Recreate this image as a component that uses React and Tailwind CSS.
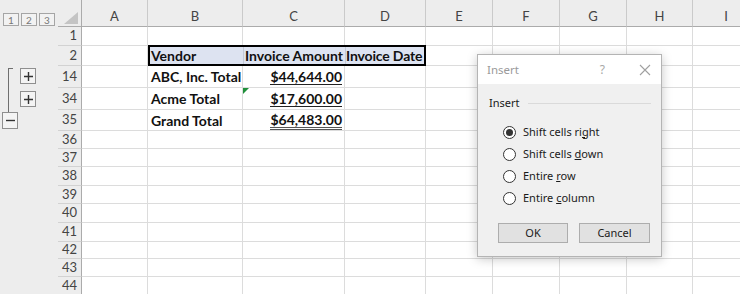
import React from 'react';

const COLS = [
  { k: 'A', w: 'w-[66px]' },
  { k: 'B', w: 'w-[95px]' },
  { k: 'C', w: 'w-[102px]' },
  { k: 'D', w: 'w-[81px]' },
  { k: 'E', w: 'w-[67px]' },
  { k: 'F', w: 'w-[67px]' },
  { k: 'G', w: 'w-[67px]' },
  { k: 'H', w: 'w-[66px]' },
  { k: 'I', w: 'w-[67px]' },
];

const ROWS = [
  { n: 1, h: 'h-[19px]' },
  { n: 2, h: 'h-[20px]' },
  { n: 14, h: 'h-[22px]', vendor: 'ABC, Inc. Total', amount: '$44,644.00', line: 'single' },
  { n: 34, h: 'h-[22px]', vendor: 'Acme Total', amount: '$17,600.00', line: 'single', flag: true },
  { n: 35, h: 'h-[21px]', vendor: 'Grand Total', amount: '$64,483.00', line: 'double' },
  { n: 36, h: 'h-[18px]' },
  { n: 37, h: 'h-[18px]' },
  { n: 38, h: 'h-[19px]' },
  { n: 39, h: 'h-[18px]' },
  { n: 40, h: 'h-[19px]' },
  { n: 41, h: 'h-[19px]' },
  { n: 42, h: 'h-[17px]' },
  { n: 43, h: 'h-[18px]' },
  { n: 44, h: 'h-[18px]' },
];

const grid = 'shrink-0 border-r border-b border-[#dcdcdc]';

function OutlineBtn({ children, className }) {
  return (
    <div className={`absolute w-[16px] h-[16px] border border-[#8f8f8f] bg-[#f4f4f4] flex items-center justify-center text-[#444] ${className}`}>
      {children}
    </div>
  );
}

function OutlineCell({ n }) {
  return (
    <div className="relative w-[58px] shrink-0 bg-[#ededed]">
      {n === 14 && (
        <>
          <div className="absolute left-[8px] top-[2px] bottom-0 w-[5px] border-l border-t border-[#6f6f6f]" />
          <OutlineBtn className="left-[20px] top-[2px]">
            <svg width="9" height="9" viewBox="0 0 9 9"><path d="M4.5 0v9M0 4.5h9" stroke="#333" strokeWidth="1.4" /></svg>
          </OutlineBtn>
        </>
      )}
      {n === 34 && (
        <>
          <div className="absolute left-[8px] top-0 bottom-0 border-l border-[#6f6f6f]" />
          <OutlineBtn className="left-[20px] top-[3px]">
            <svg width="9" height="9" viewBox="0 0 9 9"><path d="M4.5 0v9M0 4.5h9" stroke="#333" strokeWidth="1.4" /></svg>
          </OutlineBtn>
        </>
      )}
      {n === 35 && (
        <>
          <div className="absolute left-[8px] top-0 h-[2px] border-l border-[#6f6f6f]" />
          <OutlineBtn className="left-[2px] top-[2px] h-[17px]">
            <svg width="9" height="9" viewBox="0 0 9 9"><path d="M0 4.5h9" stroke="#333" strokeWidth="1.4" /></svg>
          </OutlineBtn>
        </>
      )}
    </div>
  );
}

function Amount({ value, line }) {
  if (line === 'double') {
    return <span className="inline-block leading-[15px] border-b-[3px] border-double border-[#555]">{value}</span>;
  }
  return <span className="inline-block leading-[15px] border-b border-[#222]">{value}</span>;
}

function Row({ row }) {
  const { n, h } = row;
  return (
    <div className={`flex ${h} whitespace-nowrap`}>
      <OutlineCell n={n} />
      <div className="w-[24px] shrink-0 bg-[#ededed] border-r border-b border-r-[#ababab] border-b-[#d2d2d2] flex items-center justify-end pr-[4px] text-[13px] text-[#444]">
        {n}
      </div>
      {n === 2 ? (
        <>
          <div className={`${COLS[0].w} ${grid}`} />
          <div className="w-[278px] shrink-0 -mt-px h-[21px] border-2 border-black bg-[#dde3f1] flex font-bold text-[14px] text-[#111]">
            <div className="w-[94px] shrink-0 border-r border-[#c4cad8] flex items-center pl-[1px]">Vendor</div>
            <div className="w-[102px] shrink-0 border-r border-[#c4cad8] flex items-center justify-end pr-[2px]">Invoice Amount</div>
            <div className="flex-1 min-w-0 flex items-center overflow-visible tracking-[-0.15px]">Invoice Date</div>
          </div>
          {COLS.slice(4).map((c) => (
            <div key={c.k} className={`${c.w} ${grid}`} />
          ))}
        </>
      ) : (
        COLS.map((c) => {
          if (row.vendor && c.k === 'B') {
            return (
              <div key={c.k} className={`${c.w} ${grid} flex items-center pl-[3px] font-bold text-[14px] text-[#111]`}>
                {row.vendor}
              </div>
            );
          }
          if (row.vendor && c.k === 'C') {
            return (
              <div key={c.k} className={`relative ${c.w} ${grid} flex items-center justify-end pr-[2px] pt-[1px] font-bold text-[14px] text-[#111]`}>
                {row.flag && (
                  <svg className="absolute left-0 top-0" width="6" height="6" viewBox="0 0 6 6">
                    <polygon points="0,0 6,0 0,6" fill="#1f8f3a" />
                  </svg>
                )}
                <Amount value={row.amount} line={row.line} />
              </div>
            );
          }
          return <div key={c.k} className={`${c.w} ${grid}`} />;
        })
      )}
    </div>
  );
}

function InsertDialog() {
  const options = [
    { label: <>Shift cells ri<u>g</u>ht</>, checked: true },
    { label: <>Shift cells <u>d</u>own</> },
    { label: <>Entire <u>r</u>ow</> },
    { label: <>Entire <u>c</u>olumn</> },
  ];
  return (
    <div className="absolute left-[477px] top-[54px] w-[185px] h-[203px] border border-[#b4b4b4] bg-[#f0f0f0] shadow-[0_2px_10px_rgba(0,0,0,0.22)] flex flex-col font-['Noto_Sans',sans-serif] text-[11px] text-[#1a1a1a]">
      <div className="h-[29px] bg-white flex items-center pl-[9px] pr-[10px]">
        <span className="flex-1 text-[#9a9a9a] text-[11.5px]">Insert</span>
        <span className="text-[#a8a8a8] text-[12px] mr-[34px]">?</span>
        <svg width="12" height="12" viewBox="0 0 12 12">
          <path d="M1 1l10 10M11 1L1 11" stroke="#a0a0a0" strokeWidth="1.1" />
        </svg>
      </div>
      <div className="flex-1 pl-[11px] pr-[10px] pt-[11px]">
        <div className="flex items-center gap-[8px] h-[17px]">
          <span>Insert</span>
          <div className="flex-1 h-px bg-[#dadada]" />
        </div>
        <div className="mt-[9px] pl-[14px]">
          {options.map((o, i) => (
            <div key={i} className="h-[22px] flex items-center gap-[7px]">
              <div className="w-[13px] h-[13px] rounded-full border border-[#333] bg-white flex items-center justify-center">
                {o.checked && <div className="w-[7px] h-[7px] rounded-full bg-[#333]" />}
              </div>
              <span>{o.label}</span>
            </div>
          ))}
        </div>
        <div className="mt-[14px] ml-[9px] flex gap-[11px]">
          <div className="w-[70px] h-[20px] bg-[#e1e1e1] border border-[#adadad] flex items-center justify-center">OK</div>
          <div className="w-[71px] h-[20px] bg-[#e1e1e1] border border-[#adadad] flex items-center justify-center">Cancel</div>
        </div>
      </div>
    </div>
  );
}

export default function App() {
  return (
    <div className="relative w-[740px] h-[294px] overflow-hidden bg-white font-['Lato',sans-serif]">
      {/* column headers */}
      <div className="flex h-[27px]">
        <div className="w-[58px] shrink-0 bg-[#ededed] flex items-start gap-[2px] pt-[13px] pl-[3px]">
          {[1, 2, 3].map((l) => (
            <div key={l} className="w-[16px] h-[13px] border border-[#a5a5a5] bg-[#f2f2f2] flex items-center justify-center text-[10px] text-[#777] leading-none">
              {l}
            </div>
          ))}
        </div>
        <div className="w-[24px] shrink-0 bg-[#ededed] border-r border-b border-[#ababab] flex items-end justify-end pr-[3px] pb-[2px]">
          <svg width="14" height="12" viewBox="0 0 14 12"><polygon points="14,0 14,12 0,12" fill="#c4c4c4" /></svg>
        </div>
        {COLS.map((c) => (
          <div key={c.k} className={`${c.w} shrink-0 bg-[#ededed] border-r border-b border-r-[#cacaca] border-b-[#ababab] flex items-center justify-center pt-[8px] text-[13px] text-[#444]`}>
            {c.k}
          </div>
        ))}
      </div>
      {ROWS.map((r) => (
        <Row key={r.n} row={r} />
      ))}
      <InsertDialog />
    </div>
  );
}
